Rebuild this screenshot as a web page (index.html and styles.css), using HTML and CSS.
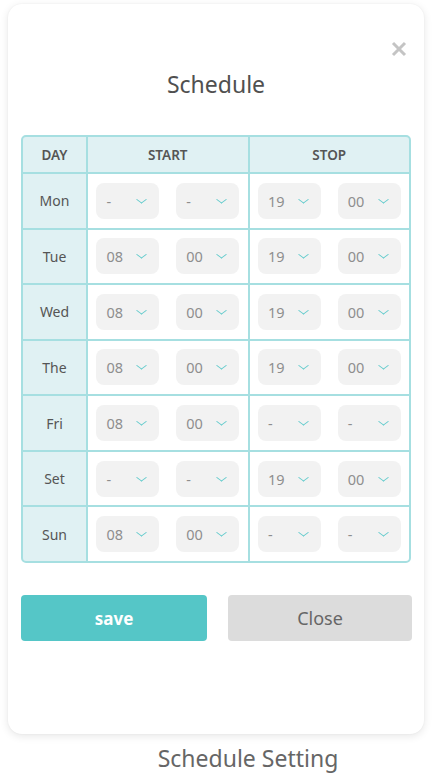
FILE: index.html
```html
<!DOCTYPE html>
<html lang="en">
<head>
<meta charset="utf-8">
<link rel="stylesheet" href="styles.css">
</head>
<body>
<div class="page">
  <div class="card">
    <button class="close-x" aria-label="close">
      <svg width="16" height="16" viewBox="0 0 16 16"><path d="M2 2 L14 14 M14 2 L2 14" stroke="#c4c4c4" stroke-width="3" stroke-linecap="butt"/></svg>
    </button>
    <h1 class="title">Schedule</h1>
    <div class="grid">
      <div class="cell head">DAY</div>
      <div class="cell head">START</div>
      <div class="cell head">STOP</div>

      <div class="cell day">Mon</div>
      <div class="cell pair"><div class="sel"><span>-</span><i></i></div><div class="sel"><span>-</span><i></i></div></div>
      <div class="cell pair"><div class="sel"><span>19</span><i></i></div><div class="sel"><span>00</span><i></i></div></div>

      <div class="cell day">Tue</div>
      <div class="cell pair"><div class="sel"><span>08</span><i></i></div><div class="sel"><span>00</span><i></i></div></div>
      <div class="cell pair"><div class="sel"><span>19</span><i></i></div><div class="sel"><span>00</span><i></i></div></div>

      <div class="cell day">Wed</div>
      <div class="cell pair"><div class="sel"><span>08</span><i></i></div><div class="sel"><span>00</span><i></i></div></div>
      <div class="cell pair"><div class="sel"><span>19</span><i></i></div><div class="sel"><span>00</span><i></i></div></div>

      <div class="cell day">The</div>
      <div class="cell pair"><div class="sel"><span>08</span><i></i></div><div class="sel"><span>00</span><i></i></div></div>
      <div class="cell pair"><div class="sel"><span>19</span><i></i></div><div class="sel"><span>00</span><i></i></div></div>

      <div class="cell day">Fri</div>
      <div class="cell pair"><div class="sel"><span>08</span><i></i></div><div class="sel"><span>00</span><i></i></div></div>
      <div class="cell pair"><div class="sel"><span>-</span><i></i></div><div class="sel"><span>-</span><i></i></div></div>

      <div class="cell day">Set</div>
      <div class="cell pair"><div class="sel"><span>-</span><i></i></div><div class="sel"><span>-</span><i></i></div></div>
      <div class="cell pair"><div class="sel"><span>19</span><i></i></div><div class="sel"><span>00</span><i></i></div></div>

      <div class="cell day">Sun</div>
      <div class="cell pair"><div class="sel"><span>08</span><i></i></div><div class="sel"><span>00</span><i></i></div></div>
      <div class="cell pair"><div class="sel"><span>-</span><i></i></div><div class="sel"><span>-</span><i></i></div></div>
    </div>
    <div class="actions">
      <button class="btn save">save</button>
      <button class="btn close">Close</button>
    </div>
  </div>
  <div class="caption">Schedule Setting</div>
</div>
</body>
</html>
```

FILE: styles.css
```css
* { box-sizing: border-box; }
html, body { margin: 0; padding: 0; background: #fff; }
body { font-family: "Noto Sans", "Open Sans", sans-serif; color: #555; }
.page { padding: 4px 8px 0; }
.card {
  position: relative;
  height: 730px;
  background: #fff;
  border-radius: 14px;
  box-shadow: 0 2px 8px rgba(0,0,0,0.10), 0 0 2px rgba(0,0,0,0.05);
  padding: 65px 13px 0 13px;
}
.close-x {
  position: absolute;
  top: 37px;
  right: 17px;
  background: none;
  border: 0;
  padding: 0;
  width: 16px;
  height: 16px;
  display: block;
}
.close-x svg { display: block; }
.title {
  margin: 0 0 36px;
  height: 30px;
  line-height: 30px;
  font-size: 23px;
  font-weight: 400;
  text-align: center;
  color: #505050;
}
.grid {
  display: grid;
  grid-template-columns: 63px 1fr 1fr;
  grid-template-rows: 35px repeat(7, 1fr);
  gap: 2px;
  height: 428px;
  width: 390px;
  background: #a6dfe1;
  border: 2px solid #a6dfe1;
  border-radius: 5px;
  overflow: hidden;
}
.cell {
  background: #fff;
  display: flex;
  align-items: center;
  justify-content: center;
  font-size: 14px;
  color: #555;
}
.head { background: #e0f1f3; font-weight: 600; font-size: 13.5px; }
.day { background: #e0f1f3; }
.pair {
  display: grid;
  grid-template-columns: 1fr 1fr;
  justify-items: center;
  align-items: center;
}
.sel {
  width: 63px;
  height: 36px;
  background: #f2f2f2;
  border-radius: 8px;
  display: flex;
  align-items: center;
  padding-left: 10px;
  position: relative;
  font-size: 14.5px;
  color: #8e8e8e;
}
.sel i {
  position: absolute;
  right: 14px;
  top: 13px;
  width: 7px;
  height: 7px;
  border-right: 1.8px solid #62cbcc;
  border-bottom: 1.8px solid #62cbcc;
  transform: rotate(45deg) scale(0.95, 0.95) skew(-8deg, -8deg);
}
.actions {
  margin-top: 32px;
  display: grid;
  grid-template-columns: 186px 184px;
  justify-content: space-between;
  width: 391px;
}
.btn {
  height: 46px;
  border: 0;
  border-radius: 4px;
  font-family: inherit;
  font-size: 17px;
}
.save { background: #55c6c7; color: #fff; font-weight: 700; }
.close { background: #dcdcdc; color: #666; font-size: 18px; }
.caption {
  margin-top: 9px;
  text-align: center;
  font-size: 23px;
  line-height: 30px;
  color: #666;
  padding-left: 64px;
}
```
